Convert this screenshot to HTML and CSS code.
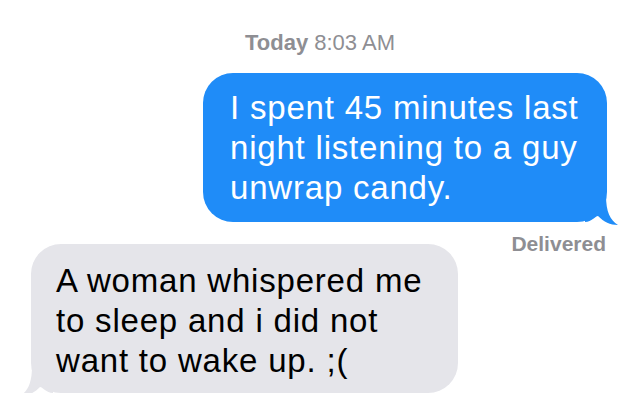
FILE: index.html
```html
<!DOCTYPE html>
<html lang="en">
<head>
    <meta charset="UTF-8">
    <meta name="viewport" content="width=device-width, initial-scale=1.0">
    <title>Messages</title>
    <link rel="stylesheet" href="styles.css">
</head>
<body>
    <div class="thread">
        <div class="timestamp"><b>Today</b> 8:03 AM</div>

        <div class="row row-sent">
            <div class="bubble sent">
                I spent 45 minutes last night listening to a guy unwrap candy.
                <svg class="tail" width="34" height="31" viewBox="0 0 34 31">
                    <path d="M0,27 C7,27 10,21 13,21 C19,27 25,30 33,30 C25,25 21,17 21,0 L0,0 Z"/>
                </svg>
            </div>
            <div class="status">Delivered</div>
        </div>

        <div class="row row-received">
            <div class="bubble received">
                A woman whispered me to sleep and i did not want to wake up. ;(
                <svg class="tail" width="34" height="31" viewBox="0 0 34 31">
                    <path d="M0,27 C7,27 10,21 13,21 C19,27 25,30 33,30 C25,25 21,17 21,0 L0,0 Z"/>
                </svg>
            </div>
        </div>
    </div>
</body>
</html>
```

FILE: styles.css
```css
body {
    margin: 0;
    padding: 0;
    background-color: #fff;
    font-family: "Liberation Sans", Arial, sans-serif;
}

.thread {
    padding-top: 31px;
}

.timestamp {
    text-align: center;
    font-size: 22px;
    line-height: 24px;
    color: #8e8e93;
    margin-bottom: 18px;
}

.row {
    display: flex;
    position: relative;
}

.row-sent {
    justify-content: flex-end;
    padding-right: 33px;
    margin-bottom: 22px;
}

.row-received {
    justify-content: flex-start;
    padding-left: 31px;
}

.bubble {
    position: relative;
    box-sizing: border-box;
    font-size: 33px;
    line-height: 40px;
    letter-spacing: 0.8px;
    border-radius: 30px;
}

.sent {
    width: 404px;
    padding: 15px 18px 14px 27px;
    background-color: #1f8cf8;
    color: #fff;
}

.received {
    width: 427px;
    padding: 17px 18px 12px 25px;
    background-color: #e5e5ea;
    color: #000;
}

.tail {
    position: absolute;
    bottom: -4px;
}

.sent .tail {
    right: -12px;
    fill: #1f8cf8;
}

.received .tail {
    left: -12px;
    fill: #e5e5ea;
    transform: scaleX(-1);
}

.status {
    position: absolute;
    right: 34px;
    top: 100%;
    margin-top: 10px;
    font-size: 21px;
    font-weight: bold;
    color: #8e8e93;
}
```
